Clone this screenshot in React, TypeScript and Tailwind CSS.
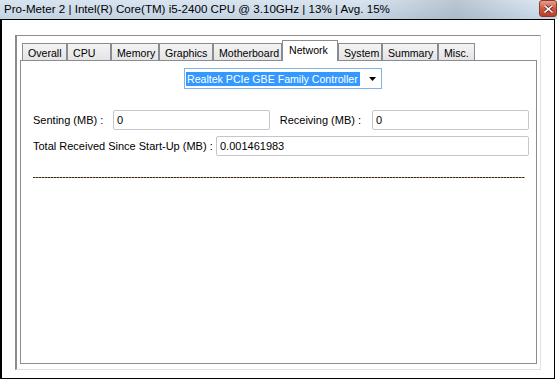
import * as React from "react";

const tabs = [
  { label: "Overall", w: "w-[45px]" },
  { label: "CPU", w: "w-[44px]" },
  { label: "Memory", w: "w-[48px]" },
  { label: "Graphics", w: "w-[54px]" },
  { label: "Motherboard", w: "w-[69px]" },
  { label: "Network", w: "w-[56px]", active: true },
  { label: "System", w: "w-[44px]" },
  { label: "Summary", w: "w-[56px]" },
  { label: "Misc.", w: "w-[37px]" },
];

function CloseButton() {
  return (
    <div className="w-[18px] h-[17px] rounded-[3px] border border-[#8a3b2c] bg-[linear-gradient(to_bottom,#e8a08e,#d0583f_50%,#b8402a)] flex items-center justify-center">
      <svg width="9" height="8" viewBox="0 0 9 8">
        <path d="M1 1 L8 7 M8 1 L1 7" stroke="#5a2018" strokeWidth="3" strokeLinecap="square" />
        <path d="M1 1 L8 7 M8 1 L1 7" stroke="#ffffff" strokeWidth="1.6" strokeLinecap="square" />
      </svg>
    </div>
  );
}

function Field({ value, w }: { value: string; w: string }) {
  return (
    <div className={`${w} h-[20px] border border-[#c3c7cd] rounded-[2px] bg-white flex items-center pl-[3px] text-[11px] text-black`}>
      {value}
    </div>
  );
}

export default function App() {
  return (
    <div className="w-[557px] h-[380px] bg-white overflow-hidden flex flex-col font-['Liberation_Sans',Arial,sans-serif] text-black">
      {/* title bar */}
      <div className="h-[19px] flex items-start justify-between bg-[linear-gradient(90deg,transparent_65%,rgba(80,95,110,0.22)_82%,transparent_96%),linear-gradient(to_bottom,#d9e4ef,#c3d3e4)]">
        <span className="pl-[4px] pt-[1px] text-[11.6px] leading-[15px] text-black whitespace-nowrap">
          Pro-Meter 2 | Intel(R) Core(TM) i5-2400 CPU @ 3.10GHz | 13% | Avg. 15%
        </span>
        <CloseButton />
      </div>

      {/* window body */}
      <div className="w-[555px] h-[360px] border-l-2 border-t border-r border-b border-black pl-[13px] pt-[15px]">
        {/* group box */}
        <div className="w-[526px] h-[335px] border-l-2 border-t border-[#8c8c8c] border-r border-b border-r-[#e2e2e2] border-b-[#e2e2e2] pl-[3px] pr-[3px] pt-[4px] pb-[5px] flex flex-col">
          {/* tabs */}
          <div className="h-[20px] flex items-end pl-[2px] relative z-10">
            {tabs.map((t) =>
              t.active ? (
                <div
                  key={t.label}
                  className={`${t.w} h-[21px] -mb-px bg-white border border-b-0 border-[#898c95] text-[10.6px] leading-[13px] pt-[3px] pl-[6px] whitespace-nowrap`}
                >
                  {t.label}
                </div>
              ) : (
                <div
                  key={t.label}
                  className={`${t.w} h-[17px] border border-b-0 border-[#898c95] bg-[linear-gradient(to_bottom,#f4f4f4,#e4e4e4)] text-[10.6px] leading-[13px] pt-[3px] pl-[5px] whitespace-nowrap`}
                >
                  {t.label}
                </div>
              )
            )}
          </div>

          {/* tab panel */}
          <div className="flex-1 border border-[#898c95] bg-white flex flex-col text-[11px]">
            {/* adapter dropdown */}
            <div className="mt-[7px] ml-[163px] w-[198px] h-[21px] border border-[#7eb4ea] flex items-center pl-[1px] pr-[5px] justify-between">
              <span className="h-[14px] leading-[14px] bg-[#3399ff] text-white text-[10.6px] pl-[1px] pr-[2px] whitespace-nowrap">
                Realtek PCIe GBE Family Controller
              </span>
              <svg width="7" height="4" viewBox="0 0 7 4">
                <path d="M0 0 H7 L3.5 4 Z" fill="#000" />
              </svg>
            </div>

            <div className="mt-[21px] ml-[12px] flex items-center">
              <span className="w-[80px] whitespace-nowrap">Senting (MB) :</span>
              <Field value="0" w="w-[157px]" />
              <span className="w-[102px] text-right pr-[11px] whitespace-nowrap">Receiving (MB) :</span>
              <Field value="0" w="w-[157px]" />
            </div>

            <div className="mt-[6px] ml-[12px] flex items-center">
              <span className="w-[183px] whitespace-nowrap">Total Received Since Start-Up (MB) :</span>
              <Field value="0.001461983" w="w-[313px]" />
            </div>

            <div className="mt-[21px] ml-[12px] w-[492px] h-px bg-[repeating-linear-gradient(90deg,#2a2a2a_0_2px,#b8895a_2px_3px)]" />
          </div>
        </div>
      </div>
    </div>
  );
}
